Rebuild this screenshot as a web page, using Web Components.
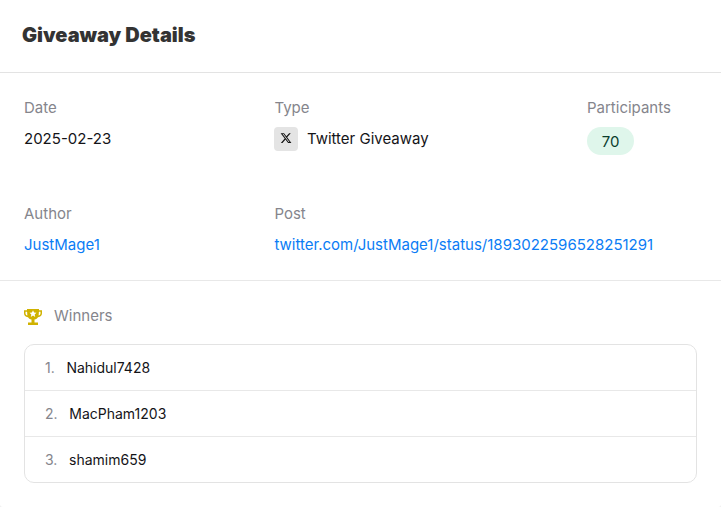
<!DOCTYPE html>
<html>
<head>
<meta charset="utf-8">
<style>
  html, body { margin: 0; background: #f0f0f0; }
  body { font-family: Inter, "Liberation Sans", sans-serif; color: #141418; }
</style>
</head>
<body>
<giveaway-card>
  <info-field label="Date" style="grid-area: 1 / 1">2025-02-23</info-field>
  <info-field label="Type" style="grid-area: 1 / 2"><type-tag>Twitter Giveaway</type-tag></info-field>
  <info-field label="Participants" style="grid-area: 1 / 3"><count-pill>70</count-pill></info-field>
  <info-field label="Author" style="grid-area: 2 / 1"><a href="#">JustMage1</a></info-field>
  <info-field label="Post" style="grid-area: 2 / 2 / 2 / 4"><a href="#">twitter.com/JustMage1/status/1893022596528251291</a></info-field>
  <winner-row slot="winners" rank="1." gap="11.7">Nahidul7428</winner-row>
  <winner-row slot="winners" rank="2." gap="11.7">MacPham1203</winner-row>
  <winner-row slot="winners" rank="3." gap="11.7">shamim659</winner-row>
</giveaway-card>

<script>
class GiveawayCard extends HTMLElement {
    constructor() {
        super()
        const shadow = this.attachShadow({ mode: 'open' })
        shadow.innerHTML = `
      <style>
        :host {
          display: block;
          width: 721px;
          height: 507px;
          background: #fff;
          border-radius: 0 0 3px 3px;
          overflow: hidden;
        }
        header {
          height: 73px;
          box-sizing: border-box;
          padding: 0 22px 3px;
          display: flex;
          align-items: center;
          border-bottom: 1px solid #e3e3e3;
        }
        h2 {
          margin: 0;
          font-size: 20px;
          font-weight: 900;
          color: #333;
        }
        .grid {
          display: grid;
          grid-template-columns: 250.400px 312.600px 1fr;
          grid-template-rows: 106px 1fr;
          height: 208px;
          box-sizing: border-box;
          padding: 25px 24px 0;
          border-bottom: 1px solid #e8e8e8;
        }
        .winners { padding: 0 24px; }
        .title {
          display: flex;
          align-items: center;
          gap: 12px;
          height: 63px;
          box-sizing: border-box;
          padding-top: 5px;
          font-size: 15px;
          color: #85858c;
        }
        svg { width: 18px; height: 16px; display: block; margin-top: 3px; }
        .list {
          border: 1px solid #e3e3e3;
          border-radius: 10px;
        }
      </style>
      <header><h2>Giveaway Details</h2></header>
      <div class="grid"><slot></slot></div>
      <div class="winners">
        <div class="title">
          <svg viewBox="0 0 18 16"><path fill="#d0b200" fill-rule="evenodd" d="M3 0h12v1.200h3v3c0 2.300-1.500 3.700-4 4-.7 1.200-1.800 2-3.500 2.300v3H14V16H4v-2.500h3.500v-3C5.800 10.200 4.700 9.400 4 8.200 1.500 7.900 0 6.500 0 4.200v-3h3zM1.500 2.800v1.400c0 1.200.6 2 1.900 2.400-.1-1-.3-2.300-.3-3.800zm13.400 0c0 1.500-.2 2.800-.3 3.800 1.300-.4 1.900-1.200 1.900-2.400V2.800zM9 1.300l1.050 2.300 2.450.25-1.850 1.600.55 2.450L9 6.600 6.800 7.900l.55-2.450L5.500 3.850l2.450-.25z"/></svg>
          <span>Winners</span>
        </div>
        <div class="list"><slot name="winners"></slot></div>
      </div>
    `
    }
}

class InfoField extends HTMLElement {
    constructor() {
        super()
        const shadow = this.attachShadow({ mode: 'open' })
        shadow.innerHTML = `
      <style>
        :host {
          display: block;
          font-size: 15px;
          color: #141418;
        }
        .label {
          color: #85858c;
          line-height: 20px;
          margin-bottom: 11px;
        }
        ::slotted(a) { color: #0a7cf5; text-decoration: none; }
      </style>
      <div class="label"></div>
      <div class="value"><slot></slot></div>
    `
    }

    connectedCallback() {
        this.shadowRoot.querySelector('.label').textContent = this.getAttribute('label') || ''
    }
}

class TypeTag extends HTMLElement {
    constructor() {
        super()
        const shadow = this.attachShadow({ mode: 'open' })
        shadow.innerHTML = `
      <style>
        :host {
          display: flex;
          align-items: center;
          gap: 8.500px;
          margin-top: -2px;
        }
        .icon {
          width: 24px;
          height: 24px;
          border-radius: 4px;
          background: #e4e4e4;
          display: flex;
          align-items: center;
          justify-content: center;
        }
        .text { margin-bottom: 1px; }
        svg { width: 12px; height: 12px; display: block; margin-bottom: 2px; }
      </style>
      <span class="icon">
        <svg viewBox="0 0 24 24"><path fill="#111" d="M18.240 2.250h3.310l-7.230 8.260 8.500 11.240h-6.660l-5.210-6.820-5.970 6.820H1.680l7.730-8.840L1.250 2.250h6.830l4.710 6.230zm-1.160 17.520h1.830L7.080 4.130H5.120z"/></svg>
      </span>
      <span class="text"><slot></slot></span>
    `
    }
}

class CountPill extends HTMLElement {
    constructor() {
        super()
        const shadow = this.attachShadow({ mode: 'open' })
        shadow.innerHTML = `
      <style>
        :host {
          display: inline-flex;
          align-items: center;
          justify-content: center;
          width: 47px;
          height: 28px;
          margin-top: -2px;
          border-radius: 14px;
          background: #dff6eb;
          color: #0b3d2e;
          font-size: 15px;
        }
      </style>
      <slot></slot>
    `
    }
}

class WinnerRow extends HTMLElement {
    constructor() {
        super()
        const shadow = this.attachShadow({ mode: 'open' })
        shadow.innerHTML = `
      <style>
        :host {
          display: flex;
          align-items: center;
          height: 45px;
          padding-left: 20px;
          font-size: 14px;
          color: #141418;
          border-bottom: 1px solid #e8e8e8;
        }
        :host(:last-child) { border-bottom: 0; }
        .rank { color: #85858c; }
      </style>
      <span class="rank"></span>
      <span class="name"><slot></slot></span>
    `
    }

    connectedCallback() {
        const rank = this.shadowRoot.querySelector('.rank')
        rank.textContent = this.getAttribute('rank') || ''
        rank.style.marginRight = (this.getAttribute('gap') || 12) + 'px'
    }
}

customElements.define('giveaway-card', GiveawayCard)
customElements.define('info-field', InfoField)
customElements.define('type-tag', TypeTag)
customElements.define('count-pill', CountPill)
customElements.define('winner-row', WinnerRow)
</script>
</body>
</html>
